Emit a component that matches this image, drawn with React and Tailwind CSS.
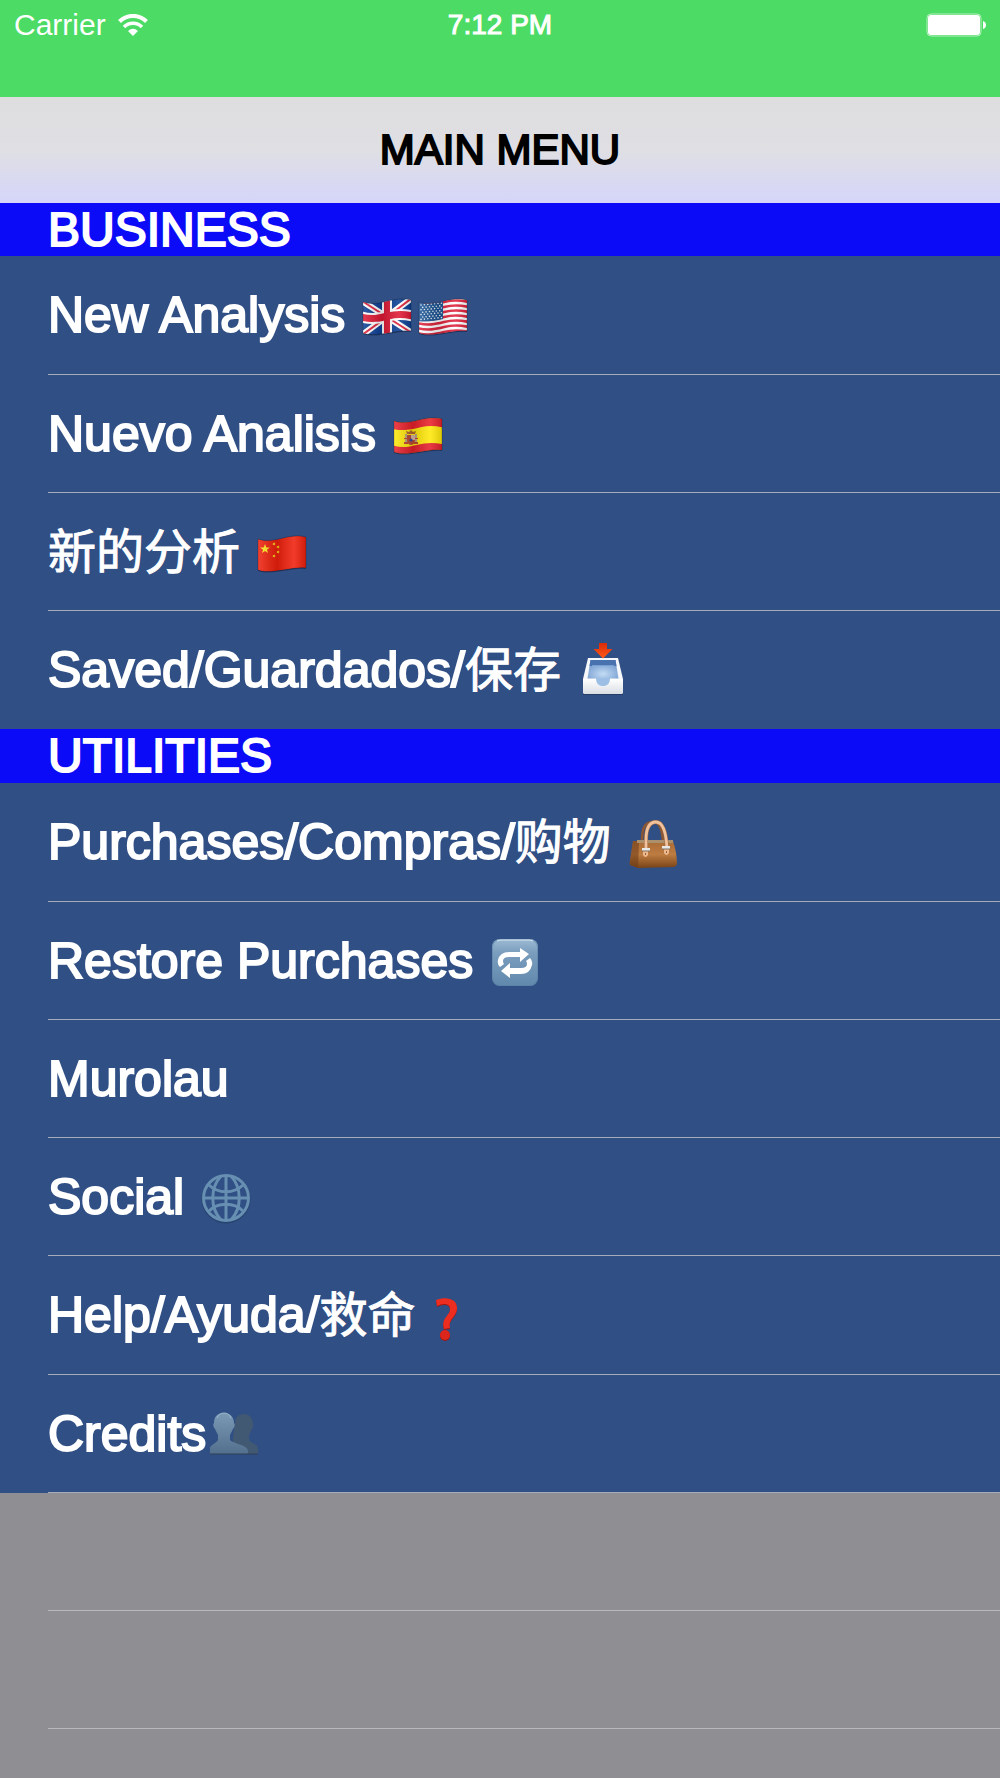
import React from 'react';

const FONT = "font-['Liberation_Sans','Noto_Sans_CJK_SC',sans-serif]";
const MEDIUM = '[-webkit-text-stroke:1px_currentColor]';
const HEAVY = '[-webkit-text-stroke:2px_currentColor]';

function Icon({ children }) {
  return (
    <svg className="h-14 w-14 shrink-0" viewBox="0 0 56 56" aria-hidden="true">
      {children}
    </svg>
  );
}

const OUTLINE = 'M4 15 C13 18 21 16 29 14 S45 11 52 13 V44 C44 43 37 45 29 46 S12 49 4 46 Z';
const wave = (y) => `M2 ${y} C13 ${y + 3} 21 ${y + 1} 29 ${y - 1} S45 ${y - 3} 54 ${y - 1}`;

function Flag({ id, base, children }) {
  return (
    <Icon>
      <defs>
        <clipPath id={id}>
          <path d={OUTLINE} />
        </clipPath>
        <linearGradient id={`${id}-shade`}>
          <stop offset="0" stopColor="#fff" stopOpacity="0.15" />
          <stop offset="0.4" stopColor="#000" stopOpacity="0.14" />
          <stop offset="0.75" stopColor="#fff" stopOpacity="0.12" />
          <stop offset="1" stopColor="#000" stopOpacity="0.14" />
        </linearGradient>
      </defs>
      <path d={OUTLINE} transform="translate(0 1)" fill="#14264b" opacity="0.5" />
      <g clipPath={`url(#${id})`}>
        <path d={OUTLINE} fill={base} />
        {children}
        <path d={OUTLINE} fill={`url(#${id}-shade)`} />
      </g>
      <path d={OUTLINE} fill="none" stroke="#000" strokeOpacity="0.2" />
    </Icon>
  );
}

function UkFlag() {
  return (
    <Flag id="uk" base="#0b3f94">
      <path d="M3 14 L53 46 M3 48 L53 11" stroke="#fff" strokeWidth="6" />
      <path d="M3 14 L28 30 M53 46 L28 30" stroke="#e0203a" strokeWidth="2" />
      <path d="M3 48 L28 30 L53 11" fill="none" stroke="#e0203a" strokeWidth="2" />
      <path d={wave(30)} fill="none" stroke="#fff" strokeWidth="11" />
      <path d="M28 10V50" stroke="#fff" strokeWidth="10" />
      <path d={wave(30)} fill="none" stroke="#df1935" strokeWidth="7" />
      <path d="M28 10V50" stroke="#df1935" strokeWidth="6" />
    </Flag>
  );
}

function UsFlag() {
  const stars = [];
  for (let r = 0; r < 7; r++) {
    for (let c = 0; c < 7; c++) {
      stars.push([6 + c * 3.4 + (r % 2) * 1.7, 18 + r * 2.4 - c * 0.3]);
    }
  }
  return (
    <Flag id="us" base="#fff">
      {[0, 1, 2, 3, 4, 5, 6].map((i) => (
        <path key={i} d={wave(16 + i * 5)} fill="none" stroke="#e0213b" strokeWidth="2.6" />
      ))}
      <path d="M2 11H28V32 C20 34 12 35 2 34Z" fill="#1c5596" />
      {stars
        .filter(([x, y]) => x < 27 && y < 33)
        .map(([x, y]) => (
          <circle key={`${x}-${y}`} cx={x} cy={y} r="0.8" fill="#e5edf8" />
        ))}
    </Flag>
  );
}

function SpainFlag() {
  return (
    <Flag id="es" base="#ffe80a">
      <path d={wave(16)} fill="none" stroke="#e9202b" strokeWidth="13" />
      <path d={wave(46)} fill="none" stroke="#e4202b" strokeWidth="13" />
      <path d="M15 28h2v9h-2z M25 28h2v9h-2z" fill="#b9a27b" />
      <path d="M14 36h4v2h-4z M24 36h4v2h-4z M14 32h4v1h-4z M24 32h4v1h-4z" fill="#c1432b" />
      <path d="M17 29h8v6q-1 4-4 4t-4-4z" fill="#bd4a32" />
      <path d="M21 29h4v5h-4z" fill="#d9b7a5" />
      <circle cx="21" cy="34" r="1.6" fill="#334a9c" />
      <path d="M17 28l-1-3 3 1 2-2 2 2 3-1-1 3z" fill="#b2662b" />
    </Flag>
  );
}

function ChinaFlag() {
  const star = '0,-5 1.3,-1.6 4.8,-1.5 2,0.7 3,4.1 0,2.1 -3,4.1 -2,0.7 -4.8,-1.5 -1.3,-1.6';
  return (
    <Flag id="cn" base="#f0200c">
      <polygon points={star} transform="translate(11 25)" fill="#ffe81c" />
      {[[20, 20], [24, 23], [24, 28], [20, 32]].map(([x, y]) => (
        <polygon key={y} points={star} transform={`translate(${x} ${y}) rotate(20) scale(0.36)`} fill="#ffe81c" />
      ))}
    </Flag>
  );
}

function InboxTray() {
  return (
    <Icon>
      <defs>
        <linearGradient id="tray-arrow" x1="0" y1="0" x2="0" y2="1">
          <stop offset="0" stopColor="#d92b08" />
          <stop offset="1" stopColor="#ff5a16" />
        </linearGradient>
        <linearGradient id="tray-front" x1="0" y1="0" x2="0" y2="1">
          <stop offset="0" stopColor="#fff" />
          <stop offset="1" stopColor="#d9dde3" />
        </linearGradient>
        <radialGradient id="tray-inside" cx="0.5" cy="0.75" r="0.7">
          <stop offset="0" stopColor="#c3dcf5" />
          <stop offset="1" stopColor="#6d95ca" />
        </radialGradient>
      </defs>
      <path d="M8 51h40v2H8z" fill="#172a50" opacity="0.5" />
      <path d="M13 16h30l5 21v13q0 2-2 2H10q-2 0-2-2V37z" fill="#f6f8fb" />
      <path d="M15.500 18h25l3 18.500H12.500z" fill="url(#tray-inside)" />
      <path d="M15.500 18h25l1 6H14.500z" fill="#4873ae" />
      <path d="M17 23h22v1.500H17z" fill="#8eb3df" opacity="0.7" />
      <path d="M8 37h13c1 9 13 9 14 0h13v13q0 2-2 2H10q-2 0-2-2z" fill="url(#tray-front)" />
      <path d="M21 36c0 6 3 8 7 8s7-2 7-8z" fill="#9dbee5" />
      <path d="M24 1h8v6h5.500L28 16.500 18.500 7H24z" fill="url(#tray-arrow)" />
    </Icon>
  );
}

function Handbag() {
  return (
    <Icon>
      <defs>
        <linearGradient id="bag-body" x1="0" y1="0" x2="0" y2="1">
          <stop offset="0" stopColor="#a96b35" />
          <stop offset="0.5" stopColor="#bd7c41" />
          <stop offset="1" stopColor="#794317" />
        </linearGradient>
      </defs>
      <path d="M17 27C17 13 20 9 27 8s10 6 11 19" fill="none" stroke="#8d5831" strokeWidth="2.500" />
      <path d="M8 27h40q4 12 4 23-1 3-4 3l-35 1-8-3q-1-2 0-4z" fill="url(#bag-body)" />
      <path d="M8 27h6l-1 27-8-3q-1-2 0-4z" fill="#6e3d18" opacity="0.55" />
      <path d="M12 26h36v3H12z" fill="#aa906c" />
      <path d="M21 37V26C21 13 25 8 31 8s10 7 11 27" fill="none" stroke="#a06c48" strokeWidth="4" />
      <path d="M21 37V26C21 13 25 8 31 8s10 7 11 27" fill="none" stroke="#f0c39d" strokeWidth="2.800" />
      <path d="M18 35h5v6q-2.500 4-5 0zM39 33h5v6q-2.500 4-5 0z" fill="#eeb98c" />
      <path d="M17 34h8v3h-8zM37 32h8v3h-8z" fill="#e7e9e8" />
      <path d="M17 37h8M37 35h8" stroke="#7d6e60" />
      <path d="M20.500 39v2M41.500 37v2" stroke="#96613e" />
    </Icon>
  );
}

function RepeatKey() {
  return (
    <Icon>
      <defs>
        <linearGradient id="key" x1="0" y1="0" x2="0" y2="1">
          <stop offset="0" stopColor="#9cbad3" />
          <stop offset="0.3" stopColor="#7a9dbd" />
          <stop offset="1" stopColor="#6189ad" />
        </linearGradient>
      </defs>
      <rect x="5" y="6" width="46" height="47" rx="8" fill="url(#key)" />
      <rect x="5.500" y="6.500" width="45" height="46" rx="8" fill="none" stroke="#557da1" strokeOpacity="0.5" />
      <path d="M10 8q2-1 4-1h28q2 0 4 1" fill="none" stroke="#d6e5f0" />
      <path d="M13 34q-3-3-2-7 2-8 11-8h11v-4l9 6-9 8v-5H22q-6 0-6 4 0 2 1 3z" fill="#fff" />
      <path d="M43 25q3 3 2 7-2 9-11 9H23v4l-9-7 9-8v5h11q6 0 6-4 0-2-1-3z" fill="#fff" />
    </Icon>
  );
}

function Globe() {
  return (
    <Icon>
      <circle cx="28" cy="30" r="23" fill="none" stroke="#1c3153" strokeOpacity="0.4" strokeWidth="3" />
      <g fill="none" stroke="#678fb2" strokeWidth="3">
        <circle cx="28" cy="29" r="22.500" />
        <path d="M28 6v46M5 29h46M11 16c9 9 25 9 34 0M11 42c9-9 25-9 34 0" />
        <path d="M23 7c-11 12-11 32 0 44M33 7c11 12 11 32 0 44" />
      </g>
    </Icon>
  );
}

function Question() {
  const hook = 'M17 13C28 9 38 12 38 21c0 9-9 10-7 20l-6 1c-3-12 6-13 6-20 0-6-7-6-13-3z';
  return (
    <svg className="h-14 w-9 shrink-0" viewBox="11 0 36 56" aria-hidden="true">
      <path d={hook} transform="translate(0 1)" fill="#9b1713" />
      <path d={hook} fill="#ec2d20" />
      <circle cx="26" cy="49" r="5" fill="#9b1713" />
      <circle cx="26" cy="48" r="5" fill="#dc251b" />
    </svg>
  );
}

function People() {
  return (
    <Icon>
      <defs>
        <linearGradient id="person" x1="0" y1="0" x2="0" y2="1">
          <stop offset="0" stopColor="#7b9ab5" />
          <stop offset="1" stopColor="#526f8d" />
        </linearGradient>
      </defs>
      <path d="M29 17c0-6 4-9 9-9s9 4 9 10q1 2-1 5l-3 6v5c3 4 9 4 9 9v5H27V31z" fill="#415973" />
      <path d="M8 17c0-7 4-10 10-10s10 4 10 10q2 2-1 6l-3 6v5c4 4 18 5 18 11v3H4v-6c0-3 7-5 8-8v-5l-3-6q-3-4-1-6z" fill="url(#person)" />
      <path d="M4 48h48" stroke="#2e4157" strokeWidth="1" />
      <path d="M11 12q2-5 7-5t7 5" fill="none" stroke="#9eb7cc" />
    </Icon>
  );
}

const SECTIONS = [
  {
    title: 'BUSINESS',
    rows: [
      { label: 'New Analysis', icons: [UkFlag, UsFlag] },
      { label: 'Nuevo Analisis', icons: [SpainFlag] },
      { cjk: '新的分析', icons: [ChinaFlag] },
      { label: 'Saved/Guardados/', cjk: '保存', icons: [InboxTray] },
    ],
  },
  {
    title: 'UTILITIES',
    rows: [
      { label: 'Purchases/Compras/', cjk: '购物', icons: [Handbag] },
      { label: 'Restore Purchases', icons: [RepeatKey] },
      { label: 'Murolau', icons: [] },
      { label: 'Social', icons: [Globe] },
      { label: 'Help/Ayuda/', cjk: '救命', icons: [Question] },
      { label: 'Credits', icons: [People], tight: true },
    ],
  },
];

function Row({ label, cjk, icons, tight, line }) {
  return (
    <li className="flex h-[118px] pl-12 nth-[4n+1]:h-[119px]">
      <button
        type="button"
        className={`flex flex-1 items-center border-b text-left text-white ${
          line ? 'border-[#a5adbd]' : 'border-transparent'
        } ${tight ? 'gap-0' : 'gap-[14px]'}`}
      >
        <span className="flex items-center whitespace-nowrap">
          {label && <span className={`text-[50px] leading-[50px] ${HEAVY}`}>{label}</span>}
          {cjk && <span className={`pt-[2px] text-5xl leading-[50px] ${MEDIUM}`}>{cjk}</span>}
        </span>
        {icons.length > 0 && (
          <span className="flex">
            {icons.map((Art, i) => (
              <Art key={i} />
            ))}
          </span>
        )}
      </button>
    </li>
  );
}

function StatusBar() {
  return (
    <div className="grid h-[97px] grid-cols-3 items-start bg-[#4cdb64] px-[14px] pt-[9px] text-white">
      <div className="flex h-8 items-center gap-3 text-[30px] leading-8">
        <span>Carrier</span>
        <svg className="h-[23px] w-[30px]" viewBox="0 0 30 23" aria-label="Wi-Fi" role="img">
          <path d="M1.500 7.500C9 0 21 0 28.500 7.500" fill="none" stroke="#fff" strokeWidth="4" />
          <path d="M6 13c5-5 13-5 18 0" fill="none" stroke="#fff" strokeWidth="3.500" />
          <path d="M10 17q5-4.500 10 0l-5 5z" fill="#fff" />
        </svg>
      </div>
      <time className={`h-8 text-center text-[28px] leading-8 ${MEDIUM}`}>7:12 PM</time>
      <div className="flex h-8 items-center justify-end">
        <svg className="h-6 w-[60px]" viewBox="0 0 60 24" aria-label="Battery full" role="img">
          <rect x="1" y="1" width="54" height="22" rx="4" fill="none" stroke="#b5f0bf" />
          <rect x="2" y="2" width="52" height="20" rx="3" fill="#fff" />
          <path d="M57 8q3 1 3 4t-3 4z" fill="#fff" />
        </svg>
      </div>
    </div>
  );
}

export default function App() {
  return (
    <div className={`flex min-h-screen flex-col bg-[#8f8e93] ${FONT}`}>
      <StatusBar />
      <header className="flex h-[106px] items-center justify-center bg-linear-to-b from-[#dededf] via-[#dfdfe4] to-[#d5d5fa]">
        <h1 className={`text-[42px] leading-none text-black ${HEAVY}`}>MAIN MENU</h1>
      </header>
      <main>
        {SECTIONS.map((section, s) => (
          <section key={section.title} className="bg-[#304f84]">
            <h2
              className={`flex items-center bg-[#0b0bf7] pl-12 text-5xl leading-none text-white ${HEAVY} ${
                s === 0 ? 'h-[53px]' : 'h-[54px]'
              }`}
            >
              {section.title}
            </h2>
            <ul>
              {section.rows.map((row, i) => (
                <Row key={i} {...row} line={s === 1 || i < section.rows.length - 1} />
              ))}
            </ul>
          </section>
        ))}
        <div aria-hidden="true" className="pl-12">
          <div className="h-[118px] border-b border-[#b9b8bd]" />
          <div className="h-[118px] border-b border-[#b9b8bd]" />
        </div>
      </main>
    </div>
  );
}
